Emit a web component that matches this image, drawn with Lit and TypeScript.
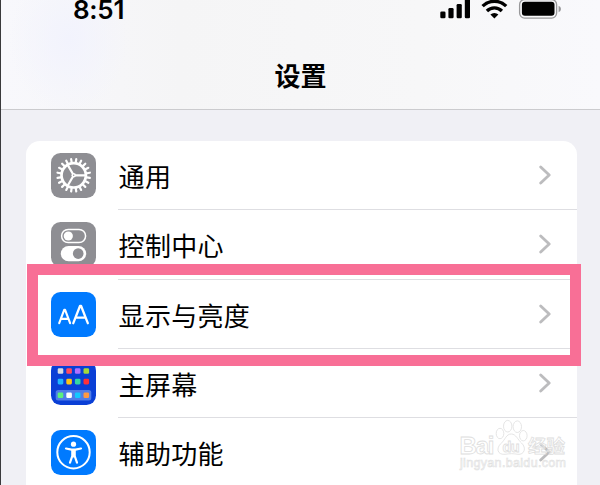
import { LitElement, html, svg, css } from 'lit';
import { customElement, property } from 'lit/decorators.js';

const gearTeeth = Array.from({ length: 20 }, (_, i) => i * 18);

const homeApps = [
  ['#d9dce0', '#ff4a60', '#b070ff', '#a5d83a'],
  ['#1fb6ff', '#ffc414', '#34d6a4', '#ff3038'],
  ['#5cf07c', '#ffffff', '#14c8ff', '#ff9a42'],
];

const icons = {
  general: svg`
    <rect width="45" height="45" rx="9.5" fill="#8e8e93" />
    <g stroke="#fff" fill="none">
      ${gearTeeth.map((a) => svg`<path d="M22.7 9V5.9" stroke-width="2.2" stroke-linecap="round" transform="rotate(${a + 9} 22.7 22.3)" />`)}
      <circle cx="22.7" cy="22.3" r="12.2" stroke-width="2.7" />
      <path d="M22.7 22.3H35M22.7 22.3L16.5 11.6M22.7 22.3L16.5 33" stroke-width="2.2" />
    </g>
    <circle cx="22.7" cy="22.3" r="2.2" fill="#fff" />
    <circle cx="22.7" cy="22.3" r="0.7" fill="#8e8e93" />`,
  control: svg`
    <rect width="45" height="45" rx="9.5" fill="#8e8e93" />
    <rect x="10.6" y="7.4" width="24" height="13.2" rx="6.6" fill="none" stroke="#fff" stroke-width="1.5" />
    <circle cx="17.3" cy="14" r="4.6" fill="#fff" />
    <rect x="9.8" y="23.9" width="25.4" height="15.4" rx="7.7" fill="#fff" />
    <circle cx="27.2" cy="31.6" r="5.3" fill="#8e8e93" />`,
  display: svg`
    <rect width="45" height="45" rx="9.5" fill="#007aff" />
    <g fill="none" stroke="#fff" stroke-linecap="round" stroke-linejoin="round">
      <path d="M8.2 31.2L13.2 17.9H14.1L19.1 31.2M10 26.9H17.3" stroke-width="2.1" />
      <path d="M22.3 31.2L29 14H30.1L36.8 31.2M24.7 25.7H34.4" stroke-width="2.3" />
    </g>`,
  home: svg`
    <rect width="45" height="44" rx="9.5" fill="#0a3fd6" />
    <rect x="4.7" y="29" width="35.6" height="10.4" rx="2.5" fill="#4f7de8" />
    ${homeApps.map((row, r) => row.map((c, i) => svg`<rect x=${6.7 + i * 8.6} y=${[7.2, 17.8, 31.4][r]} width="5.6" height="5.6" rx="1.3" fill=${c} />`))}`,
  accessibility: svg`
    <rect width="45" height="45" rx="9.5" fill="#007aff" />
    <circle cx="22.5" cy="22.2" r="16.2" fill="none" stroke="#fff" stroke-width="2" />
    <circle cx="22.5" cy="14.2" r="2.6" fill="#fff" />
    <path d="M15 18.5L20.5 19.6H24.5L30 18.5M21.3 20V26L19 32.6M23.7 20V26L26 32.6M22.5 20V26.5" fill="none" stroke="#fff" stroke-width="2.2" stroke-linecap="round" stroke-linejoin="round" />`,
};

@customElement('settings-row')
class SettingsRow extends LitElement {
  @property() icon: keyof typeof icons = 'general';
  @property() label = '';

  render() {
    return html`
      <svg class="icon" viewBox="0 0 45 45">${icons[this.icon]}</svg>
      <div class="body">
        <span class="label">${this.label}</span>
        <svg class="chevron" viewBox="0 0 12 20">
          <path d="M1.7 1.9L10.2 10L1.7 18.1" />
        </svg>
      </div>
    `;
  }

  static styles = css`
    :host {
      display: flex;
      align-items: center;
      height: 69.25px;
      padding-left: 24.5px;
    }

    .icon {
      flex: none;
      width: 45px;
      height: 45px;
    }

    .body {
      flex: 1;
      display: flex;
      align-items: center;
      justify-content: space-between;
      box-sizing: border-box;
      height: 100%;
      margin-left: 22.5px;
      padding-right: 26px;
      border-bottom: 1px solid #dedee2;
    }

    .label {
      padding: 2px 0 0 0.6px;
      font-size: 26px;
      line-height: 38px;
      letter-spacing: 0.3px;
      color: #000;
    }

    .chevron {
      width: 12px;
      height: 20px;
      fill: none;
      stroke: #bcbcbe;
      stroke-width: 2.8;
      stroke-linecap: round;
      stroke-linejoin: round;
    }
  `;
}

@customElement('status-bar')
class StatusBar extends LitElement {
  render() {
    return html`
      <span class="time">8:51</span>
      <svg class="signals" width="122" height="20" viewBox="0 0 122 20">
        <rect x="0.3" y="11.5" width="5.2" height="6.8" rx="1.3" />
        <rect x="8.4" y="8" width="5.2" height="10.3" rx="1.3" />
        <rect x="16.6" y="4" width="5.2" height="14.3" rx="1.3" />
        <rect x="24.8" y="-1" width="5.2" height="19.3" rx="1.3" />
        <g fill="none" stroke="#000" stroke-width="3.3">
          <path d="M42.6 6.2A16.6 16.6 0 0 1 66.2 6.2" />
          <path d="M46.9 11A10.7 10.7 0 0 1 61.9 11" />
        </g>
        <path d="M50.4 14.5A5.8 5.8 0 0 1 58.4 14.5L54.4 18.5Z" />
        <rect x="79.6" y="-0.5" width="37" height="18.6" rx="5" fill="none" stroke="#98989a" stroke-width="1.3" />
        <rect x="81.9" y="1.8" width="32.6" height="14" rx="3" />
        <path d="M118.6 5.8Q121 6.8 121 9T118.6 12.2Z" fill="#98989a" />
      </svg>
    `;
  }

  static styles = css`
    :host {
      display: flex;
      justify-content: space-between;
      height: 20px;
      padding: 0 38.5px 0 72px;
    }

    .time {
      font: 600 26px/20px Inter, sans-serif;
      letter-spacing: -0.3px;
    }
  `;
}

@customElement('app-root')
class AppRoot extends LitElement {
  render() {
    return html`
      <header class="header">
        <status-bar></status-bar>
        <h1 class="title">设置</h1>
      </header>
      <main class="list">
        <settings-row icon="general" label="通用"></settings-row>
        <settings-row icon="control" label="控制中心"></settings-row>
        <settings-row icon="display" label="显示与亮度"></settings-row>
        <settings-row icon="home" label="主屏幕"></settings-row>
        <settings-row icon="accessibility" label="辅助功能"></settings-row>
      </main>
      <div class="highlight"></div>
      <svg class="watermark" width="112" height="54" viewBox="0 0 112 54">
        <g class="outline">
          <text x="1.5" y="35.5" font-size="24" font-weight="700" textLength="35">Bai</text>
          <ellipse cx="42" cy="15.5" rx="3.8" ry="5.2" />
          <ellipse cx="49.7" cy="8.2" rx="4.2" ry="5.8" />
          <ellipse cx="59.3" cy="8.7" rx="4.2" ry="5.8" />
          <ellipse cx="65.3" cy="17.7" rx="3.8" ry="5.2" />
          <path d="M53.3 16C58 16 60 22 63.5 25C69 30 66 37 60 36.3C55 35.5 52 35.5 47 36.3C39 37 38 30 43 25.5C47.5 21.5 48 16 53.3 16Z" />
          <text x="44.5" y="33.5" font-size="14.5" font-weight="700" textLength="17">du</text>
          <text x="70" y="35" font-size="18.5" font-weight="700" textLength="37">经验</text>
        </g>
        <text class="url" x="2" y="49" textLength="106">jingyan.baidu.com</text>
      </svg>
    `;
  }

  static styles = css`
    :host {
      display: block;
      position: relative;
      box-sizing: border-box;
      width: 600px;
      height: 485px;
      overflow: hidden;
      background: #f0f0f5;
      border-left: 1px solid #3a3a3c;
      font-family: 'Noto Sans CJK SC', sans-serif;
    }

    .header {
      box-sizing: border-box;
      height: 110px;
      border-bottom: 1px solid #cbcbce;
      background:
        radial-gradient(ellipse 60px 75px at 68px 40px, #f2f3fd, transparent),
        linear-gradient(90deg, #f8f8fc, #f5f5f6 30%, #f7f7f8 70%, #f9f9fc);
    }

    .title {
      margin: 36px 0 0;
      font-size: 26px;
      font-weight: 700;
      line-height: 38px;
      text-align: center;
    }

    .list {
      margin: 31px 23.5px 0 25px;
      height: 360px;
      border-radius: 14px;
      background: #fff;
    }

    .highlight {
      position: absolute;
      left: 26px;
      top: 264px;
      box-sizing: border-box;
      width: 554px;
      height: 102px;
      border: 11px solid #f86f96;
    }

    .watermark {
      position: absolute;
      left: 457px;
      top: 418px;
      font-family: 'Liberation Sans', 'Noto Sans CJK SC', sans-serif;
    }

    .outline {
      fill: #fff;
      fill-opacity: 0.5;
      stroke: #dedede;
      stroke-width: 0.8;
    }

    .url {
      font-size: 12.5px;
      fill: #fff;
      stroke: #e0e0e0;
      stroke-width: 0.6;
    }
  `;
}
